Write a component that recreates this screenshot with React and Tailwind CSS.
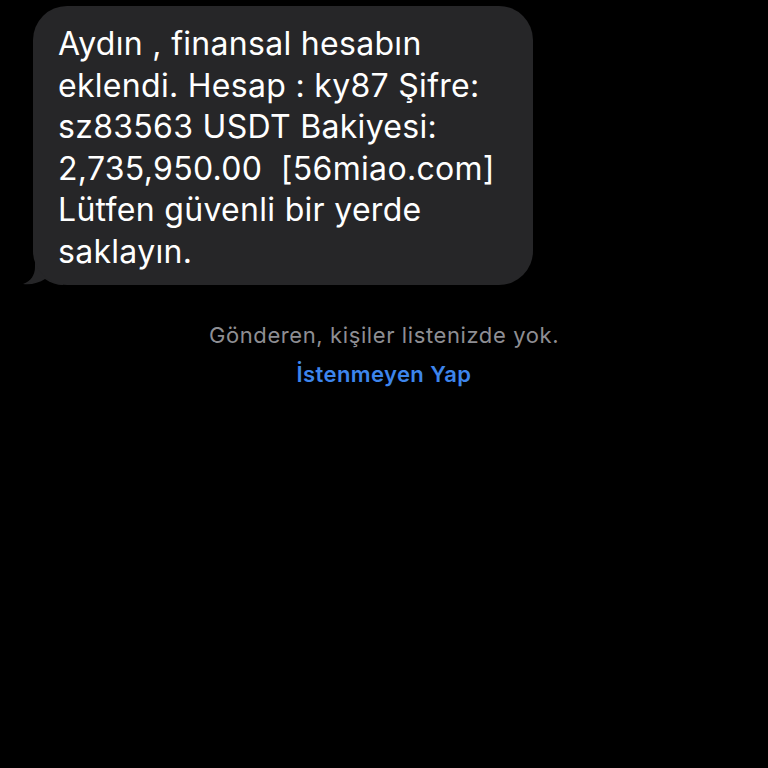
import React from 'react';

const lines = [
    'Aydın , finansal hesabın',
    'eklendi. Hesap : ky87 Şifre:',
    'sz83563 USDT Bakiyesi:',
    '2,735,950.00\u00a0 [56miao.com]',
    'Lütfen güvenli bir yerde',
    'saklayın.',
];

export default function App() {
    return (
        <div className="min-h-screen w-full bg-black font-['Inter',sans-serif] pt-[6px]">
            <div className="relative ml-[33px] w-[500px]">
                {/* tail */}
                <svg className="absolute left-[-10px] bottom-0" width="40" height="30" viewBox="0 0 40 30">
                    <path d="M12 0 L12 12 C12 20 8 26 0 29 C8 30 16 28 22 24 C28 28 34 30 40 30 L40 0 Z" fill="#262628" />
                </svg>
                <div className="relative rounded-[34px] bg-[#262628] pl-[25px] pt-[17px] pb-[13px]">
                    <div className="text-[32px] leading-[41.5px] text-white tracking-[0.3px] whitespace-nowrap">
                        {lines.map((l, i) => (
                            <div key={i}>{l}</div>
                        ))}
                    </div>
                </div>
            </div>
            <div className="mt-[37px] flex flex-col items-center text-[22px]">
                <div className="text-[#8e8e93] leading-[26px] tracking-[0.6px]">Gönderen, kişiler listenizde yok.</div>
                <div className="mt-[13px] text-[#3d85ec] font-semibold leading-[26px] tracking-[0.4px]">İstenmeyen Yap</div>
            </div>
        </div>
    );
}
